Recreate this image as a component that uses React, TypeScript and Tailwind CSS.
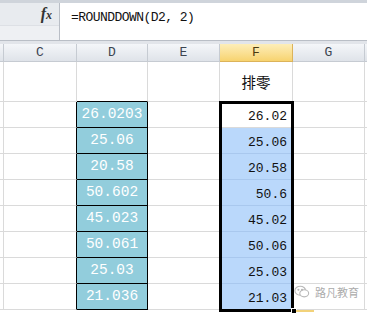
import React from 'react';

// Excel-style sheet excerpt: ROUNDDOWN(D2,2) demo
const rows = [
  { d: '26.0203', f: '26.02' },
  { d: '25.06', f: '25.06' },
  { d: '20.58', f: '20.58' },
  { d: '50.602', f: '50.6' },
  { d: '45.023', f: '45.02' },
  { d: '50.061', f: '50.06' },
  { d: '25.03', f: '25.03' },
  { d: '21.036', f: '21.03' },
];

const mono = "font-['Liberation_Mono',monospace]";
const grid = 'border-[#dadada]';

function HeaderCell({ label, w }: { label: string; w: string }) {
  const active = label === 'F';
  return (
    <div
      className={`${w} shrink-0 h-[18px] flex items-center justify-center border-r border-b text-[13px] ${mono} ${
        active
          ? 'bg-gradient-to-b from-[#fdeeb8] to-[#f7d36f] border-[#dcb35a] text-[#4a3a10]'
          : 'bg-gradient-to-b from-[#f4f6f9] to-[#dfe3e9] border-[#c6cbd2] text-[#3c4450]'
      }`}
    >
      {label}
    </div>
  );
}

export default function App() {
  return (
    <div className="relative w-[367px] h-[313px] overflow-hidden bg-white">
      {/* Formula bar */}
      <div className="flex h-[41px] border-t-[3px] border-[#cfd4db] border-b border-b-[#b9bec6]">
        <div className="w-[60px] flex flex-col border-r border-[#b9bec6]">
          <div className="h-[22px] bg-[#e8ebef] flex items-center justify-end pr-[7px]">
            <span className="font-['Liberation_Serif',serif] italic font-bold text-[16px] text-[#333] leading-none">
              f<span className="text-[12px]">x</span>
            </span>
          </div>
          <div className="flex-1 bg-[#eef0f3] border-t border-[#dde0e5]" />
        </div>
        <div className={`flex-1 bg-white pl-[11px] pt-[5px] text-[13px] text-[#111] ${mono} tracking-[-0.55px]`}>
          =ROUNDDOWN(D2,&nbsp;2)
        </div>
      </div>
      <div className="h-[3px] bg-[#e2e5ea]" />

      {/* Column headers */}
      <div className="flex">
        <HeaderCell label="" w="w-[4px]" />
        <HeaderCell label="C" w="w-[73px]" />
        <HeaderCell label="D" w="w-[71px]" />
        <HeaderCell label="E" w="w-[72px]" />
        <HeaderCell label="F" w="w-[73px]" />
        <HeaderCell label="G" w="w-[72px]" />
        <div className="flex-1 h-[18px] border-b border-[#c6cbd2] bg-gradient-to-b from-[#f4f6f9] to-[#dfe3e9]" />
      </div>

      {/* Title row */}
      <div className="flex h-[40px]">
        <div className={`w-[4px] shrink-0 border-r border-b ${grid}`} />
        <div className={`w-[73px] shrink-0 border-r border-b ${grid}`} />
        <div className={`w-[71px] shrink-0 border-r ${grid} border-b border-b-black`} />
        <div className={`w-[72px] shrink-0 border-r border-b ${grid}`} />
        <div className={`w-[73px] shrink-0 flex items-center justify-center border-r border-b ${grid} text-[14.5px] text-[#111] font-['Noto_Sans_CJK_SC',sans-serif]`}>
          排零
        </div>
        <div className={`w-[72px] shrink-0 border-r border-b ${grid}`} />
        <div className={`flex-1 border-b ${grid}`} />
      </div>

      {/* Data rows */}
      {rows.map((r, i) => (
        <div key={i} className="flex h-[26px]">
          <div className={`w-[4px] shrink-0 border-r border-b ${grid}`} />
          <div className={`w-[73px] shrink-0 border-r border-r-black border-b border-b-[#dadada]`} />
          <div className={`w-[71px] shrink-0 flex items-center justify-center bg-[#92cddc] border-r border-b border-black text-white text-[14.5px] ${mono}`}>
            {r.d}
          </div>
          <div className={`w-[72px] shrink-0 border-r border-b ${grid}`} />
          <div
            className={`w-[73px] shrink-0 flex items-end justify-end pr-[5px] pb-[1px] border-r border-b text-[13px] text-[#111] ${mono} ${
              i === 0 ? 'bg-white border-[#dadada]' : 'bg-[#bad8fb] border-[#a9c8ee]'
            }`}
          >
            {r.f}
          </div>
          <div className={`w-[72px] shrink-0 border-r border-b ${grid}`} />
          <div className={`flex-1 border-b ${grid}`} />
        </div>
      ))}

      {/* Selection outline over F2:F9 */}
      <div className="absolute left-[219px] top-[101px] w-[75px] h-[211px] border-[3px] border-black pointer-events-none" />
      <div className="absolute left-[291px] top-[308px] w-[6px] h-[6px] bg-black border border-white" />
      <div className="absolute left-[296px] top-[310px] w-[18px] h-[2px] bg-[#f2d27a]" />

      {/* Watermark */}
      <div className="absolute left-[294px] top-[285px] flex items-center gap-[5px] opacity-75">
        <svg width="16" height="14" viewBox="0 0 18 15" fill="none" stroke="#a0a0a0" strokeWidth="1.2">
          <ellipse cx="7" cy="6" rx="6" ry="5" fill="white" />
          <ellipse cx="11.5" cy="9" rx="5" ry="4" fill="white" />
          <circle cx="5" cy="5" r="0.6" fill="#a0a0a0" />
          <circle cx="9" cy="5" r="0.6" fill="#a0a0a0" />
        </svg>
        <span className="text-[11px] text-[#8f8f8f] font-['Noto_Sans_CJK_SC',sans-serif] leading-none [text-shadow:0_0_2px_white]">
          路凡教育
        </span>
      </div>
    </div>
  );
}
